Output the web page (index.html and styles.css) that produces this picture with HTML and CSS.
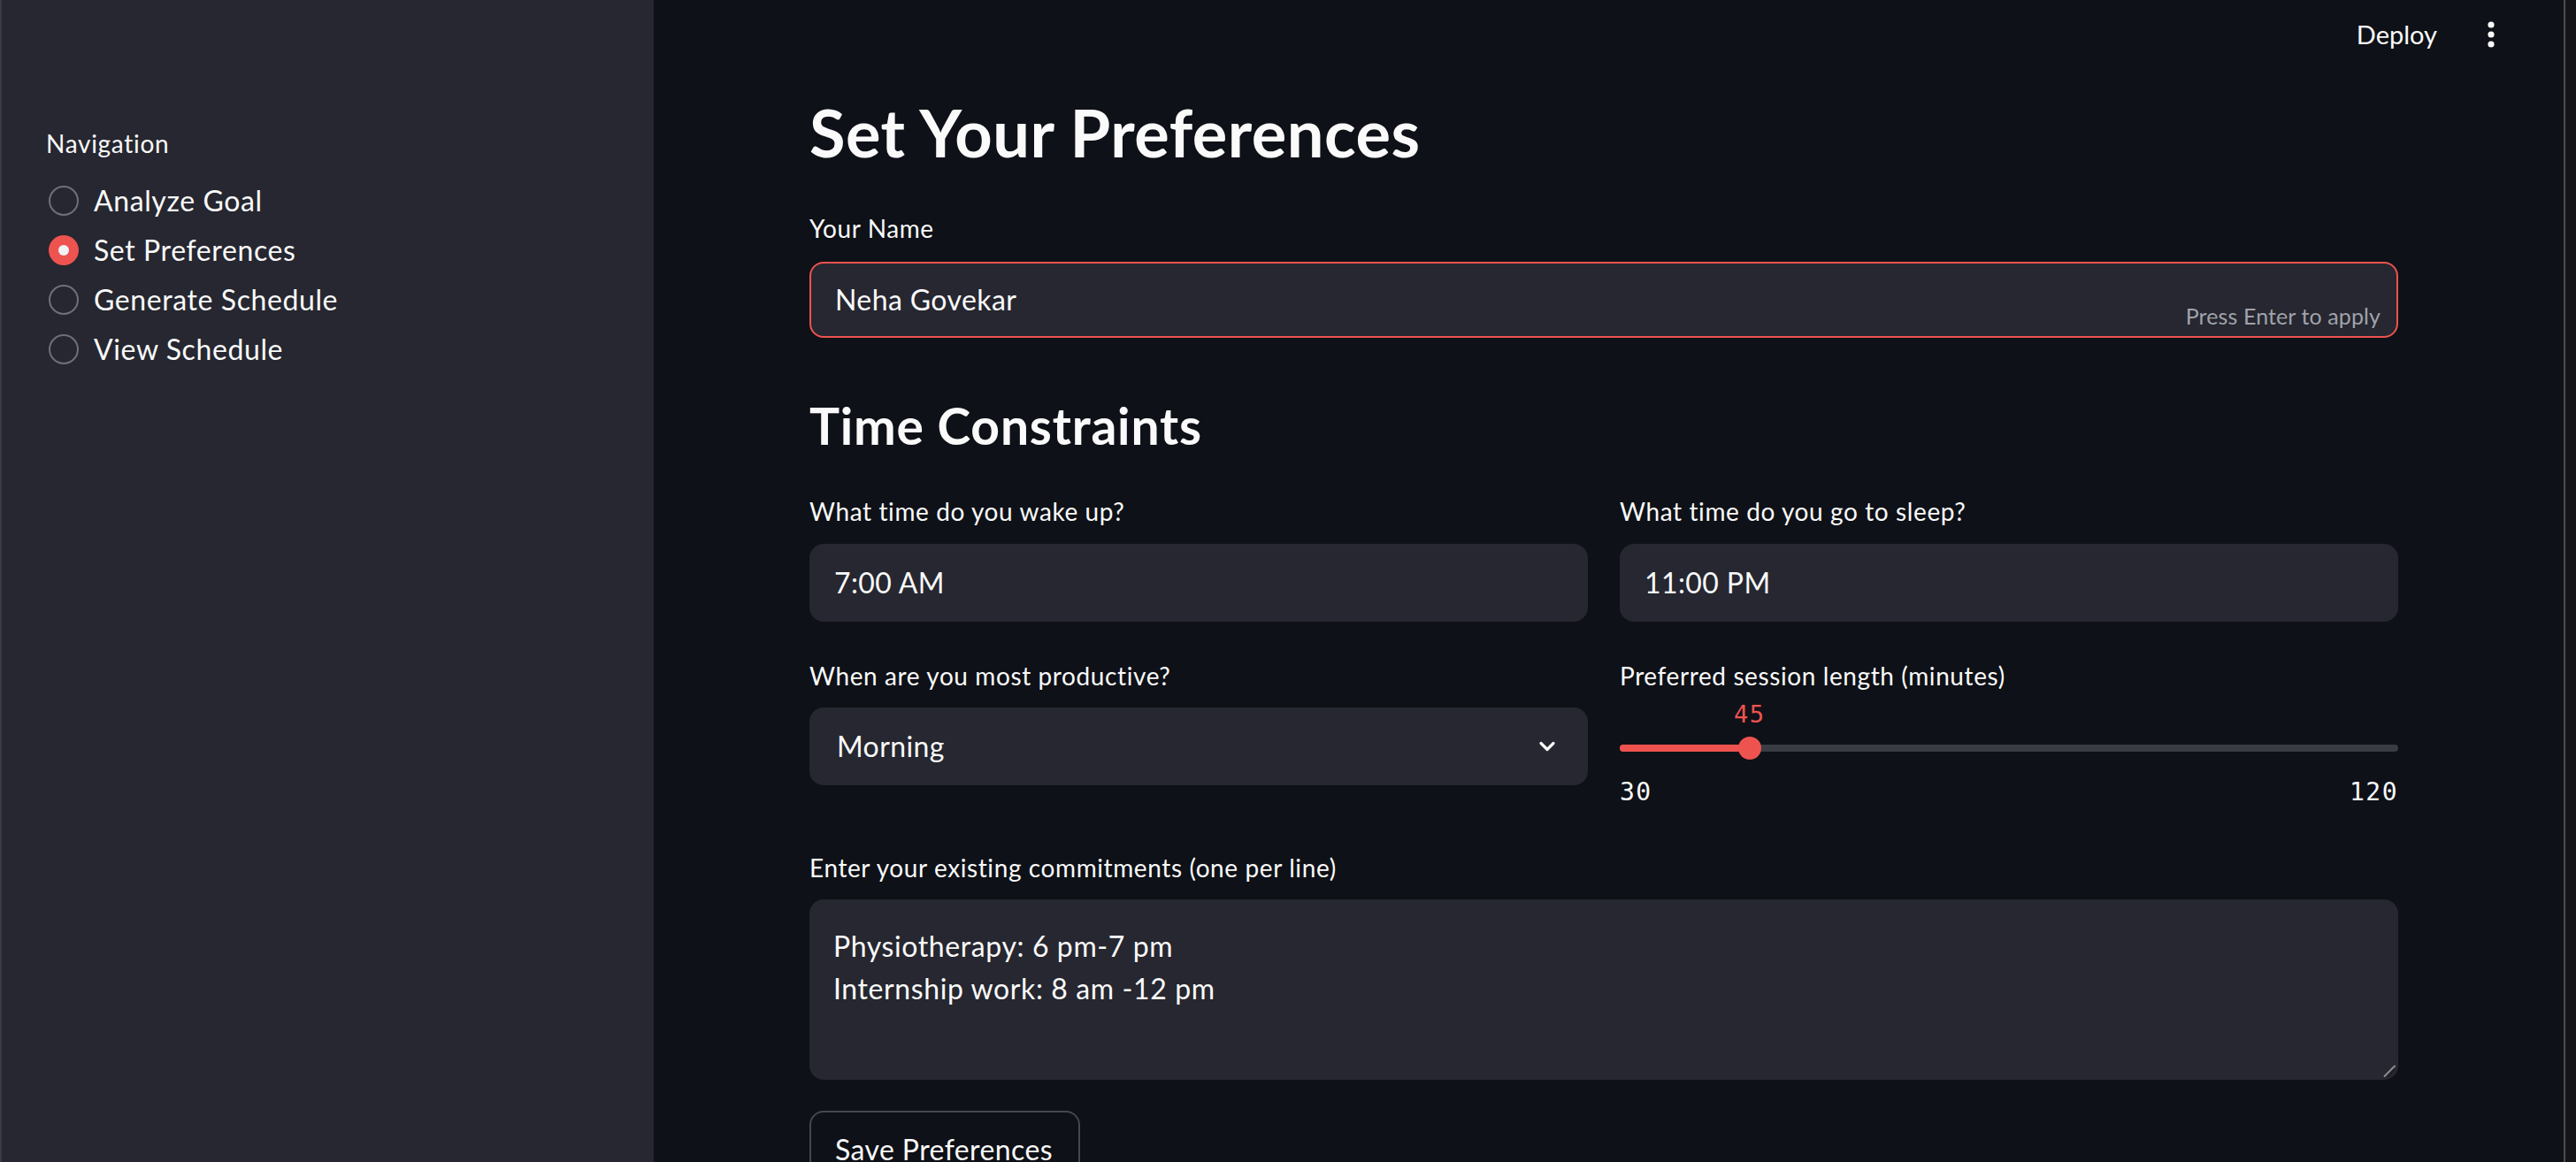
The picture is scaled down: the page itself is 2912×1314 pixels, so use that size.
FILE: index.html
```html
<!DOCTYPE html>
<html lang="en">
<head>
<meta charset="utf-8">
<title>Set Your Preferences</title>
<link rel="stylesheet" href="styles.css">
</head>
<body>
<div class="app">
  <aside class="sidebar">
    <div class="nav-label">Navigation</div>
    <div class="radio-group">
      <div class="radio"><span class="radio-dot"></span><span class="radio-text">Analyze Goal</span></div>
      <div class="radio checked"><span class="radio-dot"></span><span class="radio-text">Set Preferences</span></div>
      <div class="radio"><span class="radio-dot"></span><span class="radio-text">Generate Schedule</span></div>
      <div class="radio"><span class="radio-dot"></span><span class="radio-text">View Schedule</span></div>
    </div>
  </aside>

  <main class="main">
    <header class="topbar">
      <span class="deploy">Deploy</span>
      <svg class="kebab" width="8" height="30" viewBox="0 0 8 30"><circle cx="4" cy="4" r="3.6" fill="#fafafa"/><circle cx="4" cy="15" r="3.6" fill="#fafafa"/><circle cx="4" cy="26" r="3.6" fill="#fafafa"/></svg>
    </header>

    <section class="content">
      <h1 class="title">Set Your Preferences</h1>

      <div class="label name-label">Your Name</div>
      <div class="box input focused">
        <span class="value">Neha Govekar</span>
        <span class="hint">Press Enter to apply</span>
      </div>

      <h2 class="subtitle">Time Constraints</h2>

      <div class="cols row1">
        <div class="col">
          <div class="label">What time do you wake up?</div>
          <div class="box field"><span class="value">7:00 AM</span></div>
        </div>
        <div class="col">
          <div class="label">What time do you go to sleep?</div>
          <div class="box field"><span class="value">11:00 PM</span></div>
        </div>
      </div>

      <div class="cols row2">
        <div class="col">
          <div class="label">When are you most productive?</div>
          <div class="box select">
            <span class="value">Morning</span>
            <svg class="chevron" width="20" height="12" viewBox="0 0 20 12"><polyline points="3,2.5 10,9.5 17,2.5" fill="none" stroke="#fafafa" stroke-width="3.2" stroke-linecap="round" stroke-linejoin="round"/></svg>
          </div>
        </div>
        <div class="col">
          <div class="label">Preferred session length (minutes)</div>
          <div class="slider">
            <div class="slider-value-row"><span class="slider-value" style="left:16.667%">45</span></div>
            <div class="slider-track">
              <div class="slider-fill" style="width:16.667%"></div>
              <span class="slider-thumb" style="left:16.667%"></span>
            </div>
            <div class="slider-minmax"><span>30</span><span>120</span></div>
          </div>
        </div>
      </div>

      <div class="label commit-label">Enter your existing commitments (one per line)</div>
      <div class="box textarea">
        <div class="ta-line">Physiotherapy: 6 pm-7 pm</div>
        <div class="ta-line">Internship work: 8 am -12 pm</div>
        <svg class="resize" width="14" height="14" viewBox="0 0 14 14"><line x1="13" y1="1.5" x2="1.5" y2="13" stroke="#8e8f94" stroke-width="1.8" stroke-linecap="round"/><line x1="13" y1="5.5" x2="5.5" y2="13" stroke="#1a1b21" stroke-width="1.5"/></svg>
      </div>

      <button class="btn">Save Preferences</button>
    </section>
  </main>

  <div class="edge"></div>
</div>
</body>
</html>
```

FILE: styles.css
```css
html, body {
  margin: 0;
  padding: 0;
  height: 1314px;
  overflow: hidden;
  background: #0e1117;
}

body {
  font-family: "Lato", "Open Sans", sans-serif;
  color: #fafafa;
}

.app {
  display: flex;
  width: 2912px;
  height: 1314px;
}

/* Sidebar */
.sidebar {
  width: 739px;
  flex: none;
  background: #262730;
  border-left: 2px solid #3a3b41;
  padding: 142px 0 0 50px;
  box-sizing: border-box;
}

.nav-label {
  font-size: 28px;
  line-height: 40px;
  letter-spacing: 0.7px;
}

.radio-group {
  margin-top: 17px;
  display: flex;
  flex-direction: column;
}

.radio {
  display: flex;
  align-items: center;
  height: 56px;
  gap: 17px;
}

.radio-dot {
  width: 34px;
  height: 34px;
  box-sizing: border-box;
  border: 2px solid #6f7077;
  border-radius: 50%;
  margin-left: 3px;
  flex: none;
  display: flex;
  align-items: center;
  justify-content: center;
}

.radio.checked .radio-dot {
  border: none;
  background: #ee5350;
}

.radio.checked .radio-dot::after {
  content: "";
  width: 12px;
  height: 12px;
  border-radius: 50%;
  background: #f0f2f6;
}

.radio-text {
  font-size: 32px;
  line-height: 40px;
  letter-spacing: 0.6px;
}

/* Main */
.main {
  flex: 1;
  display: flex;
  flex-direction: column;
  min-width: 0;
}

.topbar {
  height: 78px;
  display: flex;
  align-items: center;
  justify-content: flex-end;
  padding-right: 78px;
  gap: 57px;
  flex: none;
}

.deploy {
  font-size: 29px;
  line-height: 40px;
}

.kebab {
  display: block;
}

.content {
  width: 1796px;
  padding-left: 176px;
  display: flex;
  flex-direction: column;
}

.title {
  margin: 27px 0 0 0;
  font-size: 74px;
  line-height: 89px;
  font-weight: 700;
  letter-spacing: 0.5px;
}

.subtitle {
  margin: 65px 0 0 0;
  font-size: 57px;
  line-height: 68px;
  font-weight: 700;
  letter-spacing: 0.8px;
}

.label {
  font-size: 28px;
  line-height: 40px;
  letter-spacing: 0.6px;
}

.name-label {
  margin-top: 44px;
}

.box {
  background: #262730;
  border-radius: 16px;
  box-sizing: border-box;
  position: relative;
}

.value {
  font-size: 32px;
  line-height: 40px;
  letter-spacing: 0.4px;
}

.input {
  margin-top: 18px;
  height: 86px;
  border: 2px solid #ee5350;
  display: flex;
  align-items: center;
  padding-left: 27px;
}

.hint {
  position: absolute;
  right: 18px;
  bottom: 11px;
  font-size: 25px;
  line-height: 24px;
  color: #a0a2aa;
  letter-spacing: 0.1px;
}

.cols {
  display: grid;
  grid-template-columns: 1fr 1fr;
  column-gap: 36px;
  align-items: start;
}

.row1 {
  margin-top: 43px;
}

.row2 {
  margin-top: 41px;
}

.field {
  margin-top: 17px;
  height: 88px;
  display: flex;
  align-items: center;
  padding-left: 28px;
}

.select {
  margin-top: 16px;
  height: 88px;
  display: flex;
  align-items: center;
  justify-content: space-between;
  padding-left: 31px;
  padding-right: 36px;
}

.chevron {
  display: block;
}

/* Slider */
.slider {
  display: flex;
  flex-direction: column;
}

.slider-value-row {
  position: relative;
  margin-top: 11px;
  height: 26px;
}

.slider-value {
  position: absolute;
  top: 0;
  transform: translateX(-50%);
  font-family: "DejaVu Sans Mono", "Liberation Mono", monospace;
  font-size: 27px;
  line-height: 26px;
  letter-spacing: 1.5px;
  color: #ee5350;
}

.slider-track {
  position: relative;
  margin-top: 21px;
  height: 8px;
  border-radius: 4px;
  background: #3a3c44;
}

.slider-fill {
  height: 8px;
  border-radius: 4px;
  background: #ee5350;
}

.slider-thumb {
  position: absolute;
  top: -9px;
  width: 26px;
  height: 26px;
  margin-left: -13px;
  border-radius: 50%;
  background: #ee5350;
}

.slider-minmax {
  margin-top: 32px;
  display: flex;
  justify-content: space-between;
  font-family: "DejaVu Sans Mono", "Liberation Mono", monospace;
  font-size: 28px;
  line-height: 27px;
  letter-spacing: 1.5px;
}

.commit-label {
  margin-top: 52px;
}

.textarea {
  margin-top: 16px;
  height: 204px;
  padding: 29px 0 0 27px;
}

.ta-line {
  font-size: 32px;
  line-height: 48px;
  letter-spacing: 0.6px;
}

.resize {
  position: absolute;
  right: 3px;
  bottom: 3px;
}

.btn {
  align-self: flex-start;
  margin-top: 35px;
  background: #0e1117;
  color: #fafafa;
  border: 2px solid #45474f;
  border-radius: 16px;
  font-family: "Lato", "Open Sans", sans-serif;
  font-size: 32px;
  line-height: 48px;
  letter-spacing: 0.4px;
  padding: 18px 27px;
  width: 306px;
  text-align: left;
}

.edge {
  width: 12px;
  flex: none;
  background: #151518;
  border-left: 2px solid #4c4c51;
}
```
